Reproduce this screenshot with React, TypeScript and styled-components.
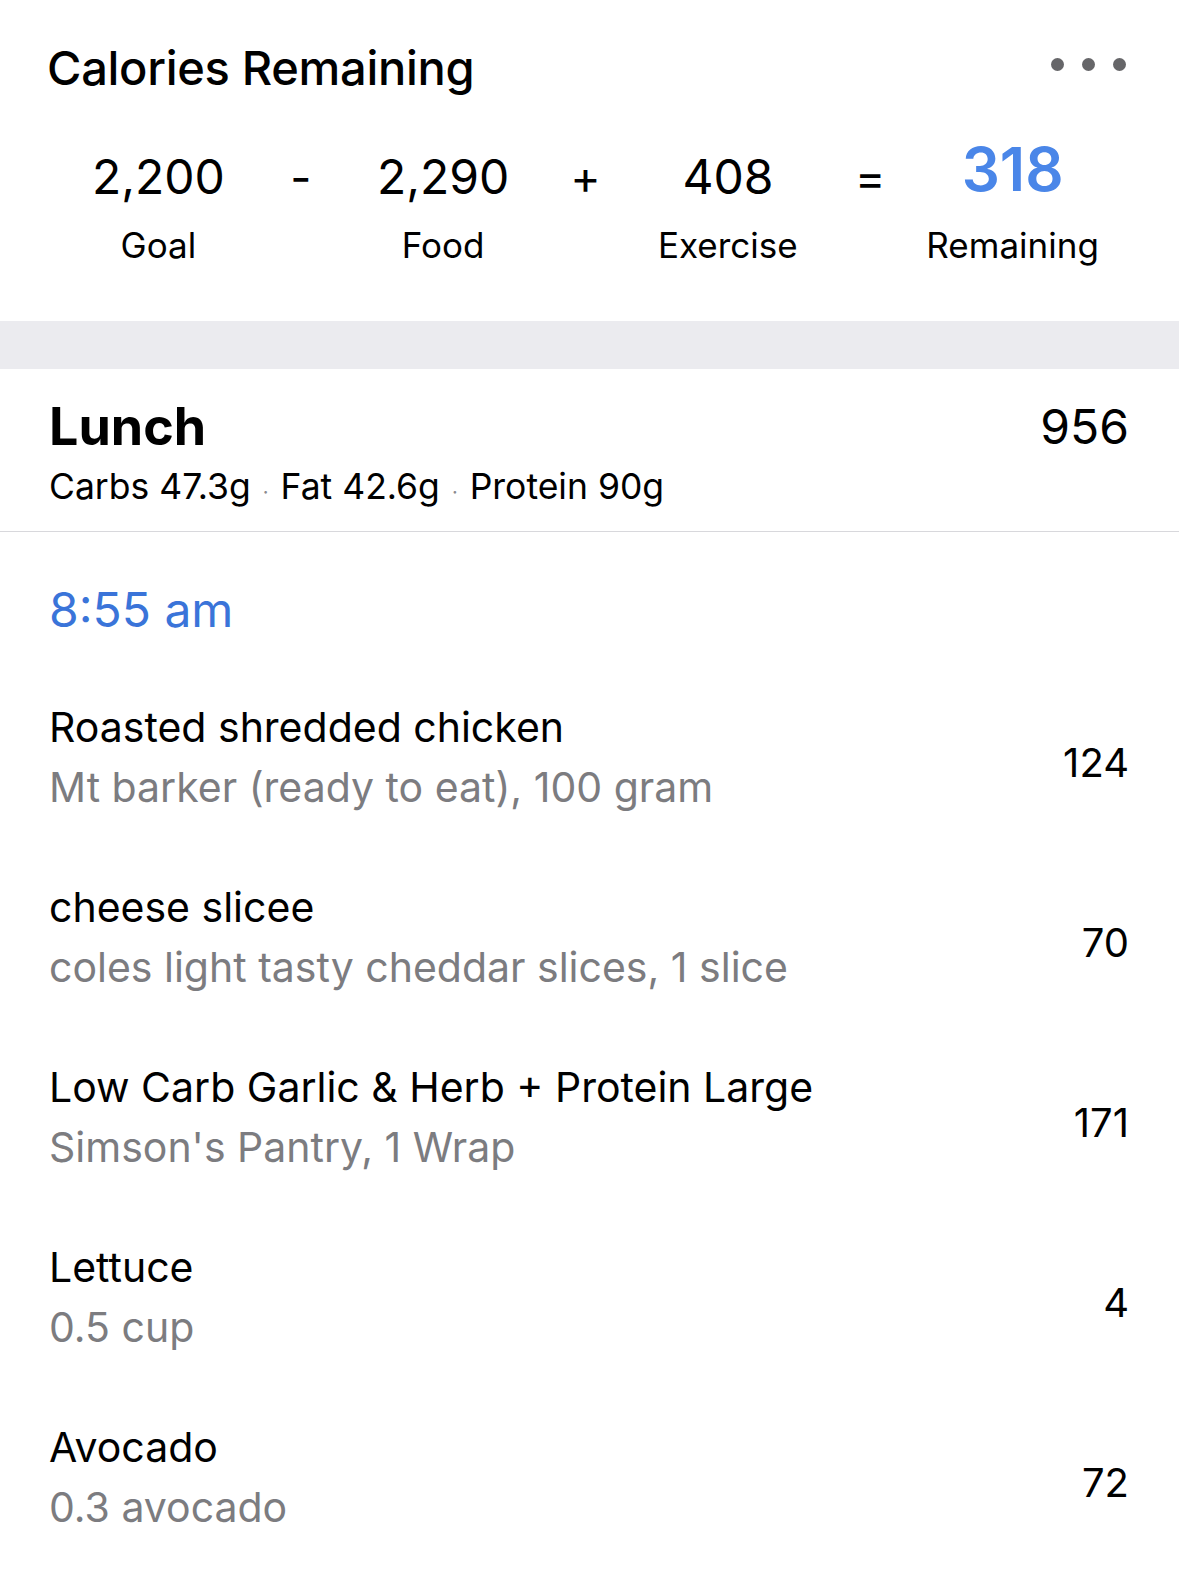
import React from "react";
import styled, { createGlobalStyle } from "styled-components";

const GlobalStyle = createGlobalStyle`
  html, body {
    margin: 0;
    padding: 0;
    background: #ffffff;
  }
  body {
    font-family: Inter, "Noto Sans", "Liberation Sans", sans-serif;
    color: #000000;
    -webkit-font-smoothing: antialiased;
  }
`;

const Page = styled.div`
  width: 1179px;
  background: #ffffff;
`;

const Summary = styled.section`
  padding: 39px 53px 54px 47px;
`;

const TitleRow = styled.div`
  display: flex;
  justify-content: space-between;
  align-items: flex-start;
`;

const Title = styled.h1`
  margin: 0;
  font-size: 47px;
  line-height: 58px;
  font-weight: 500;
  letter-spacing: -0.3px;
`;

const MoreButton = styled.div`
  display: flex;
  gap: 18px;
  margin-top: 19px;
`;

const Dot = styled.span`
  width: 13px;
  height: 13px;
  border-radius: 50%;
  background: #666669;
`;

const Equation = styled.div`
  display: flex;
  margin: 51px -9px 0 -11px;
`;

const Stat = styled.div`
  flex: 1;
  display: flex;
  flex-direction: column;
  align-items: center;
`;

const Value = styled.div<{ $highlight?: boolean }>`
  font-size: ${(p) => (p.$highlight ? "60px" : "48px")};
  font-weight: ${(p) => (p.$highlight ? 600 : 400)};
  color: ${(p) => (p.$highlight ? "#4a86e8" : "#000000")};
  line-height: 58px;
  height: 58px;
  margin-top: ${(p) => (p.$highlight ? "-8px" : "0")};
  margin-bottom: ${(p) => (p.$highlight ? "8px" : "0")};
`;

const Label = styled.div`
  margin-top: 17px;
  font-size: 35px;
  line-height: 44px;
`;

const Operator = styled.div`
  width: 40px;
  text-align: center;
  font-size: 46px;
  line-height: 58px;
`;

const Band = styled.div`
  height: 48px;
  background: #ebebef;
`;

const MealHeader = styled.header`
  display: flex;
  justify-content: space-between;
  align-items: flex-start;
  padding: 27px 50px 17px 49px;
  border-bottom: 1px solid #d8d8dc;
`;

const MealInfo = styled.div`
  display: flex;
  flex-direction: column;
`;

const MealTitle = styled.h2`
  margin: 0;
  font-size: 52px;
  line-height: 62px;
  font-weight: 700;
`;

const Macros = styled.div`
  margin-top: 7px;
  font-size: 35.5px;
  line-height: 44px;
  display: flex;
  align-items: baseline;
`;

const Sep = styled.span`
  color: #8a8a8e;
  font-size: 20px;
  margin: 0 12px;
`;

const MealTotal = styled.div`
  font-size: 48px;
  line-height: 62px;
`;

const TimeHeading = styled.h3`
  margin: 0;
  padding: 51px 49px 30px;
  font-size: 48px;
  line-height: 54px;
  font-weight: 400;
  color: #3a74d9;
`;

const FoodRow = styled.div`
  display: flex;
  align-items: center;
  justify-content: space-between;
  height: 180px;
  padding: 0 50px 0 49px;
`;

const FoodText = styled.div`
  display: flex;
  flex-direction: column;
`;

const FoodName = styled.div`
  font-size: 41px;
  line-height: 60px;
`;

const FoodDetail = styled.div`
  font-size: 41px;
  line-height: 60px;
  color: #7c7c80;
`;

const FoodCalories = styled.div`
  font-size: 40px;
  line-height: 60px;
  margin-top: 12px;
`;

const stats = [
  { value: "2,200", label: "Goal", op: "-" },
  { value: "2,290", label: "Food", op: "+" },
  { value: "408", label: "Exercise", op: "=" },
  { value: "318", label: "Remaining", highlight: true },
];

const foods = [
  { name: "Roasted shredded chicken", detail: "Mt barker (ready to eat), 100 gram", cal: "124" },
  { name: "cheese slicee", detail: "coles light tasty cheddar slices, 1 slice", cal: "70" },
  { name: "Low Carb Garlic & Herb + Protein Large", detail: "Simson's Pantry, 1 Wrap", cal: "171" },
  { name: "Lettuce", detail: "0.5 cup", cal: "4" },
  { name: "Avocado", detail: "0.3 avocado", cal: "72" },
];

export default function App() {
  return (
    <Page>
      <GlobalStyle />
      <Summary>
        <TitleRow>
          <Title>Calories Remaining</Title>
          <MoreButton aria-label="More">
            <Dot />
            <Dot />
            <Dot />
          </MoreButton>
        </TitleRow>
        <Equation>
          {stats.map((s) => (
            <React.Fragment key={s.label}>
              <Stat>
                <Value $highlight={s.highlight}>{s.value}</Value>
                <Label>{s.label}</Label>
              </Stat>
              {s.op && <Operator>{s.op}</Operator>}
            </React.Fragment>
          ))}
        </Equation>
      </Summary>
      <Band />
      <MealHeader>
        <MealInfo>
          <MealTitle>Lunch</MealTitle>
          <Macros>
            Carbs 47.3g<Sep>·</Sep>Fat 42.6g<Sep>·</Sep>Protein 90g
          </Macros>
        </MealInfo>
        <MealTotal>956</MealTotal>
      </MealHeader>
      <TimeHeading>8:55 am</TimeHeading>
      {foods.map((f) => (
        <FoodRow key={f.name}>
          <FoodText>
            <FoodName>{f.name}</FoodName>
            <FoodDetail>{f.detail}</FoodDetail>
          </FoodText>
          <FoodCalories>{f.cal}</FoodCalories>
        </FoodRow>
      ))}
    </Page>
  );
}
